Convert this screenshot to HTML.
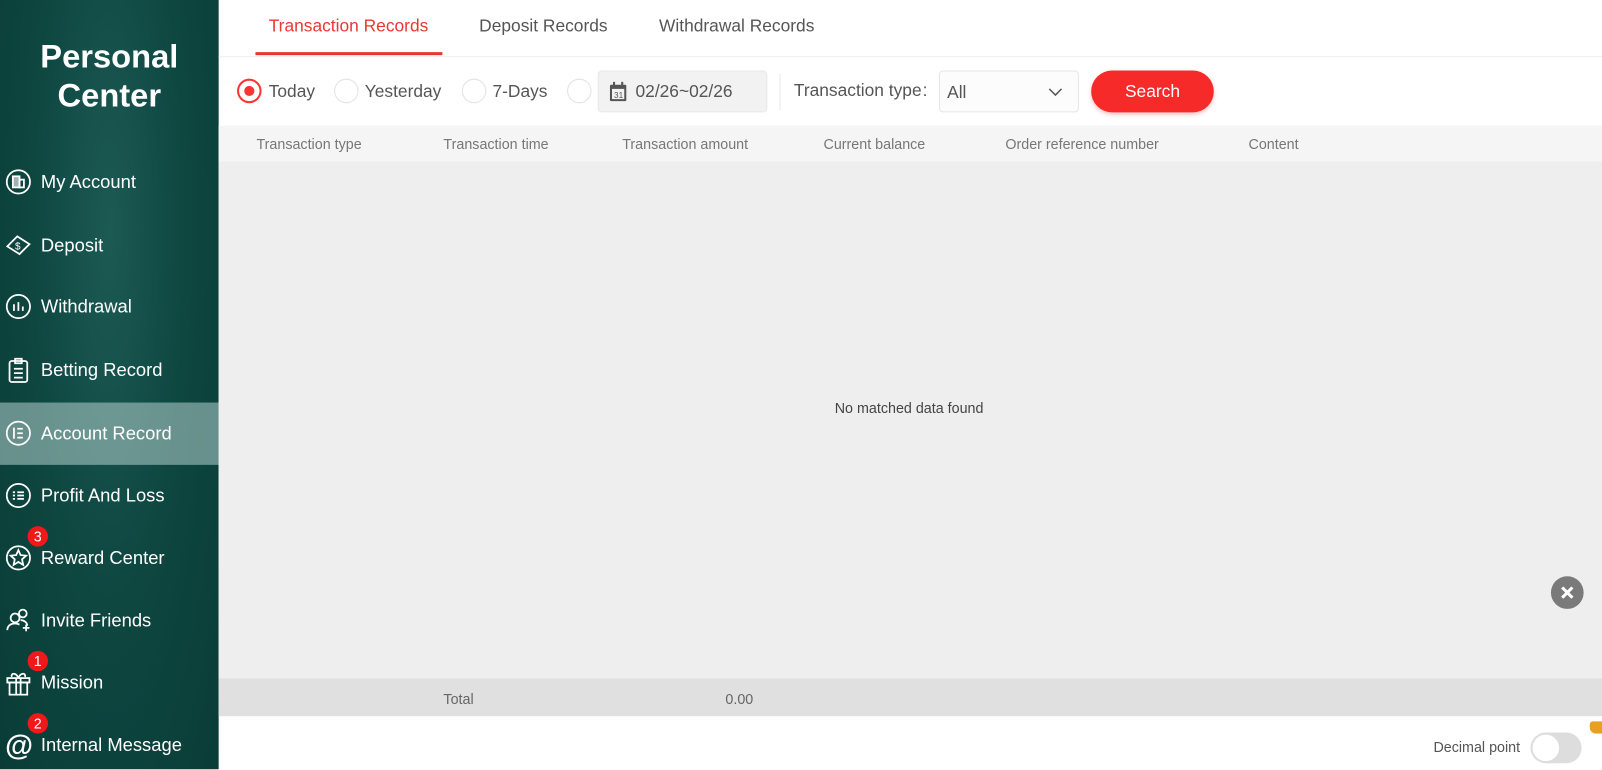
<!DOCTYPE html>
<html><head><meta charset="utf-8"><style>
*{margin:0;padding:0;box-sizing:border-box}
html,body{width:1602px;height:770px;overflow:hidden;background:#fff}
#o{position:fixed;left:0;top:0;width:1602px;height:770px;overflow:hidden}
#w{position:absolute;left:0;top:0;width:1568px;height:753px;transform:scale(1.0217);transform-origin:0 0;font-family:"Liberation Sans",sans-serif;background:#fff;overflow:hidden}
.sb{position:absolute;left:0;top:0;width:214px;height:753px;background:radial-gradient(ellipse at 50% 30%,#1d5a54 0%,#0e4640 50%,#0a3c37 100%)}
.title{position:absolute;left:0;width:214px;top:36px;text-align:center;color:#fff;font-weight:bold;font-size:32px;line-height:38px}
.it{position:absolute;left:0;width:214px;height:61px;color:#fff;font-size:18px;line-height:61px;padding-left:40px}
.it.act{background:rgba(180,210,205,.55)}
.ic{position:absolute;left:5px;top:17px;width:26px;height:26px}
.bd{position:absolute;left:27px;top:-1px;width:20px;height:20px;border-radius:50%;background:#f01818;color:#fff;font-size:14px;line-height:20px;text-align:center}
.t{position:absolute;font-size:17px;color:#555}
.hd{position:absolute;font-size:14px;color:#777;top:133px}
.radio{position:absolute;top:77px;width:24px;height:24px;border-radius:50%;border:1px solid #e3e3e3;background:#fff}
</style></head><body><div id="o"><div id="w">
<div class="sb">
<div class="title">Personal<br>Center</div>
<div class="it" style="top:148px"><svg class="ic" viewBox="0 0 24 24" fill="none" stroke="#fff" stroke-width="1.6"><circle cx="12" cy="12" r="10.5"/><rect x="7" y="7" width="6" height="10" fill="#fff" fill-opacity=".6"/><rect x="13" y="10" width="4" height="7"/></svg>My Account</div>
<div class="it" style="top:210px"><svg class="ic" viewBox="0 0 24 24" fill="none" stroke="#fff" stroke-width="1.6"><path d="M2 13 L11 4 L22 11 L13 20 Z"/><text x="9" y="16" font-size="9" fill="#fff" stroke="none" font-family="Liberation Sans">$</text></svg>Deposit</div>
<div class="it" style="top:270px"><svg class="ic" viewBox="0 0 24 24" fill="none" stroke="#fff" stroke-width="1.6"><circle cx="12" cy="12" r="10.5"/><path d="M8 10v6M12 8v8M16 12v4"/></svg>Withdrawal</div>
<div class="it" style="top:332px"><svg class="ic" viewBox="0 0 24 24" fill="none" stroke="#fff" stroke-width="1.6"><rect x="4" y="4" width="16" height="19" rx="2"/><path d="M9 2h6v4H9zM8 11h8M8 15h8M8 19h8"/></svg>Betting Record</div>
<div class="it act" style="top:394px"><svg class="ic" viewBox="0 0 24 24" fill="none" stroke="#fff" stroke-width="1.6"><circle cx="12" cy="12" r="10.5"/><path d="M8 7v10M11 8h5M11 12h5M11 16h5"/></svg>Account Record</div>
<div class="it" style="top:455px"><svg class="ic" viewBox="0 0 24 24" fill="none" stroke="#fff" stroke-width="1.6"><circle cx="12" cy="12" r="10.5"/><path d="M7 9h2M7 12h2M7 15h2M11 9h6M11 12h6M11 15h6"/></svg>Profit And Loss</div>
<div class="it" style="top:516px"><svg class="ic" viewBox="0 0 24 24" fill="none" stroke="#fff" stroke-width="1.6"><circle cx="12" cy="12" r="10.5"/><path d="M12 5l2 4.5 5 .5-3.7 3.3 1 5-4.3-2.6-4.3 2.6 1-5L5 10l5-.5z"/></svg><div class="bd">3</div>Reward Center</div>
<div class="it" style="top:577px"><svg class="ic" viewBox="0 0 24 24" fill="none" stroke="#fff" stroke-width="1.6"><circle cx="9" cy="10" r="4"/><circle cx="16" cy="6" r="3.5"/><path d="M2 21c0-4 3-6 7-6 2 0 3 .5 4 1M14 12c3 0 6 2 6 5M16 19h6M19 16v6"/></svg>Invite Friends</div>
<div class="it" style="top:638px"><svg class="ic" viewBox="0 0 24 24" fill="none" stroke="#fff" stroke-width="1.6"><rect x="2" y="8" width="20" height="4"/><rect x="4" y="12" width="16" height="11"/><path d="M10 8v15M14 8v15M12 8c-2-5-7-5-6-1M12 8c2-5 7-5 6-1"/></svg><div class="bd">1</div>Mission</div>
<div class="it" style="top:699px"><span style="position:absolute;left:5px;top:0;font-size:28px;font-weight:bold">@</span><div class="bd">2</div>Internal Message</div>
</div>

<div style="position:absolute;left:214px;top:55px;width:1354px;height:1px;background:#eee"></div>
<div class="t" style="left:263px;top:16px;color:#e8392f">Transaction Records</div>
<div style="position:absolute;left:250px;top:51px;width:183px;height:3px;background:#e8392f"></div>
<div class="t" style="left:469px;top:16px">Deposit Records</div>
<div class="t" style="left:645px;top:16px">Withdrawal Records</div>

<div class="radio" style="left:232px;border:2px solid #f33"><div style="position:absolute;left:5px;top:5px;width:10px;height:10px;border-radius:50%;background:#f33"></div></div>
<div class="t" style="left:263px;top:80px">Today</div>
<div class="radio" style="left:327px"></div><div class="t" style="left:357px;top:80px">Yesterday</div>
<div class="radio" style="left:452px"></div><div class="t" style="left:482px;top:80px">7-Days</div>
<div class="radio" style="left:555px"></div>
<div style="position:absolute;left:585px;top:69px;width:166px;height:41px;background:#f2f2f2;border:1px solid #e8e8e8;border-radius:4px"></div>
<svg style="position:absolute;left:596px;top:80px" width="18" height="20" viewBox="0 0 18 20"><rect x="1" y="3" width="16" height="16" rx="1" fill="#555"/><rect x="3" y="7" width="12" height="10" fill="#f2f2f2"/><rect x="4" y="0" width="2" height="5" fill="#555"/><rect x="12" y="0" width="2" height="5" fill="#555"/><text x="5" y="16" font-size="8" fill="#555" font-family="Liberation Sans">31</text></svg>
<div class="t" style="left:622px;top:80px">02/26~02/26</div>
<div style="position:absolute;left:763px;top:72px;width:1px;height:36px;background:#e8e8e8"></div>
<div class="t" style="left:777px;top:79px">Transaction type</div><div class="t" style="left:903px;top:79px">:</div>
<div style="position:absolute;left:919px;top:69px;width:137px;height:41px;border:1px solid #e5e5e5;border-radius:4px;background:#fcfcfc"></div>
<div class="t" style="left:927px;top:81px">All</div>
<svg style="position:absolute;left:1026px;top:86px" width="14" height="9" viewBox="0 0 14 9"><path d="M1 1l6 6 6-6" fill="none" stroke="#555" stroke-width="1.5"/></svg>
<div style="position:absolute;left:1068px;top:69px;width:120px;height:41px;border-radius:21px;background:#f72a2a;color:#fff;font-size:17px;line-height:41px;text-align:center;box-shadow:0 2px 4px rgba(240,40,40,.3)">Search</div>

<div style="position:absolute;left:214px;top:123px;width:1354px;height:35px;background:#f5f5f5"></div>
<div class="hd" style="left:251px">Transaction type</div>
<div class="hd" style="left:434px">Transaction time</div>
<div class="hd" style="left:609px">Transaction amount</div>
<div class="hd" style="left:806px">Current balance</div>
<div class="hd" style="left:984px">Order reference number</div>
<div class="hd" style="left:1222px">Content</div>
<div style="position:absolute;left:214px;top:158px;width:1354px;height:506px;background:#eee"></div>
<div style="position:absolute;left:817px;top:391px;font-size:14px;color:#444">No matched data found</div>
<div style="position:absolute;left:1518px;top:564px;width:32px;height:32px;border-radius:50%;background:#7a7a7a"><svg width="32" height="32" viewBox="0 0 32 32"><path d="M11 11l10 10M21 11l-10 10" stroke="#fff" stroke-width="3"/></svg></div>
<div style="position:absolute;left:214px;top:664px;width:1354px;height:37px;background:#e0e0e0"></div>
<div class="hd" style="left:434px;top:676px;color:#666">Total</div>
<div class="hd" style="left:710px;top:676px;color:#666">0.00</div>
<div style="position:absolute;left:1403px;top:723px;font-size:14px;color:#555">Decimal point</div>
<div style="position:absolute;left:1498px;top:717px;width:50px;height:30px;border-radius:15px;background:#ddd"><div style="position:absolute;left:2px;top:2px;width:26px;height:26px;border-radius:50%;background:#fff"></div></div>
<div style="position:absolute;left:1556px;top:706px;width:12px;height:12px;background:#e8a020;border-radius:3px 0 0 6px"></div>
</div></div></body></html>
